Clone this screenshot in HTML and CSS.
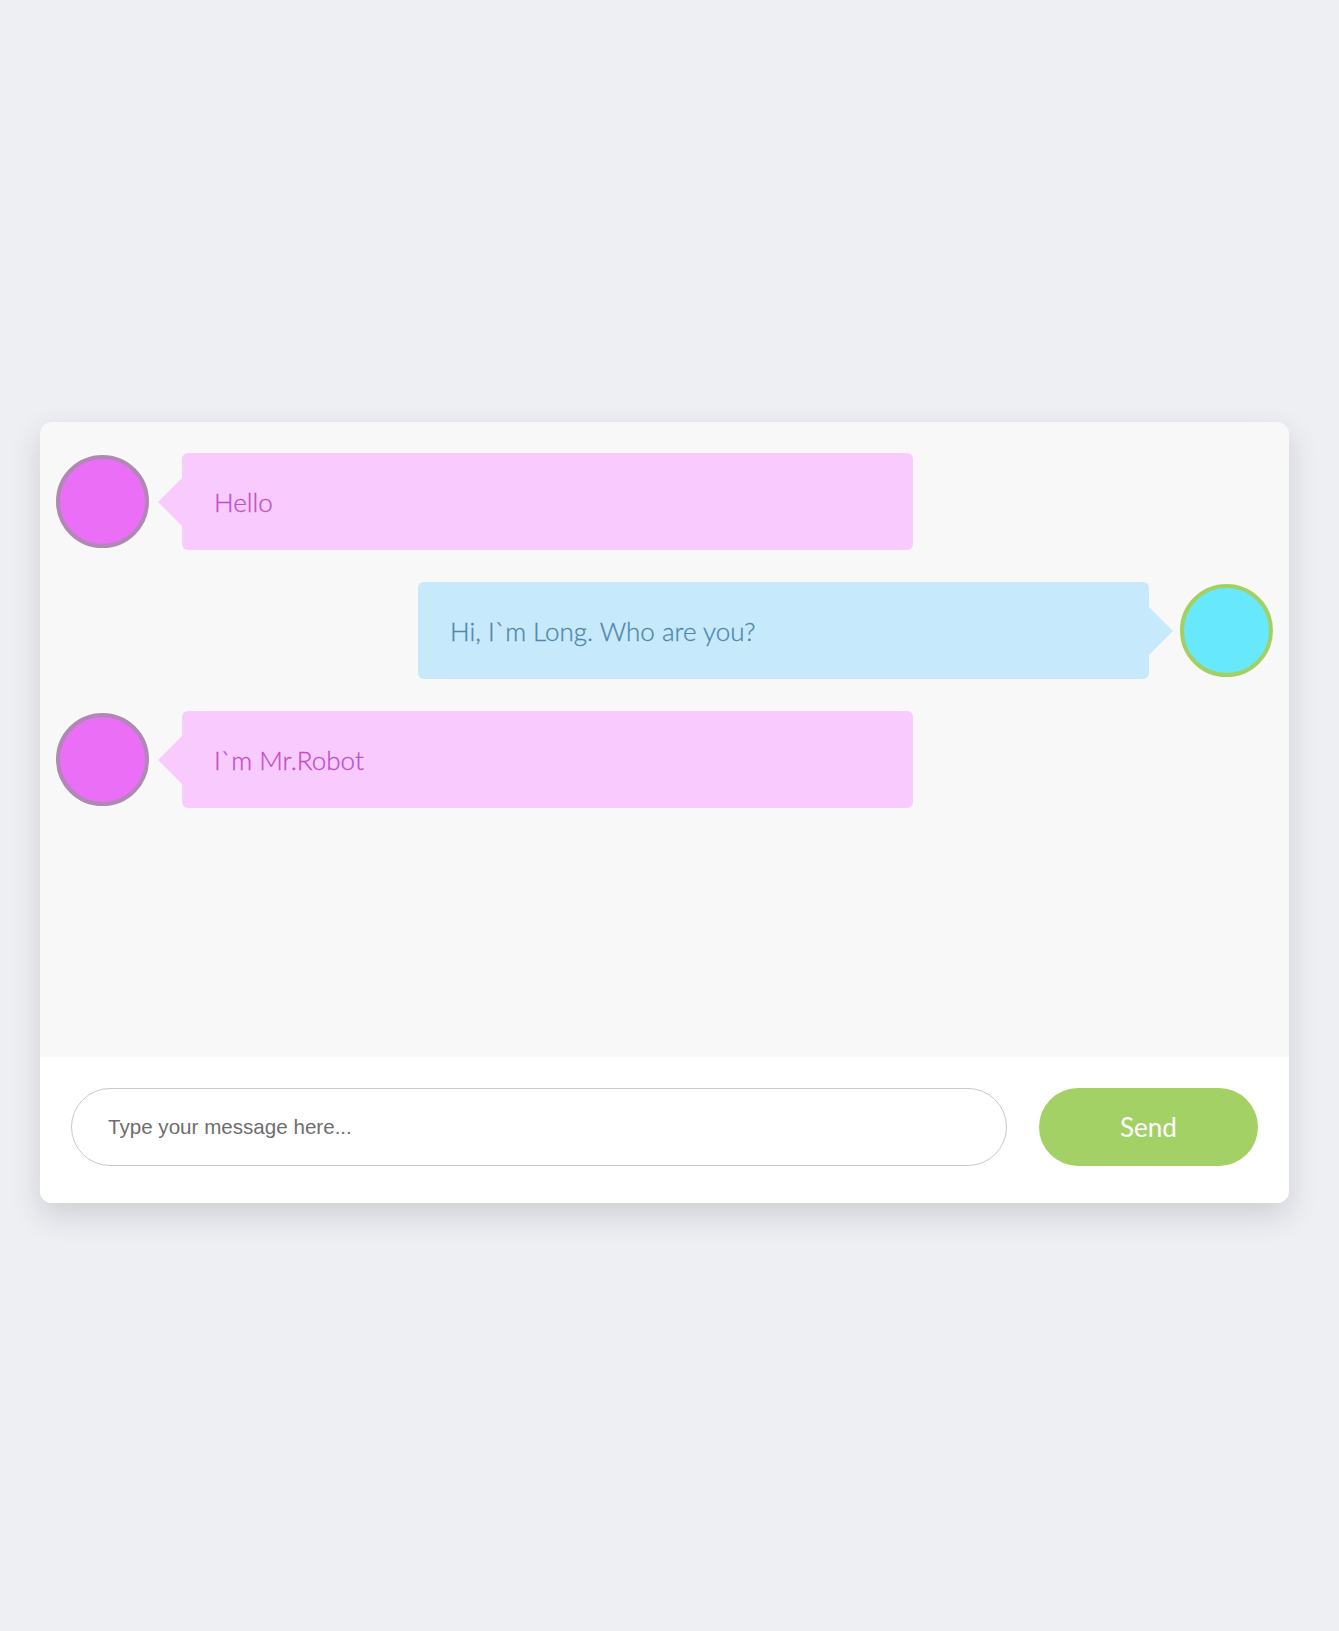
FILE: index.html
```html
<!DOCTYPE html>
<html lang="en">
<head>
<meta charset="utf-8">
<title>Chat</title>
<link rel="stylesheet" href="styles.css">
</head>
<body>
<div class="chat">
  <div class="messages">
    <div class="row row-left">
      <div class="avatar avatar-robot"></div>
      <div class="bubble bubble-robot">Hello</div>
    </div>
    <div class="row row-right">
      <div class="bubble bubble-user">Hi, I`m Long. Who are you?</div>
      <div class="avatar avatar-user"></div>
    </div>
    <div class="row row-left">
      <div class="avatar avatar-robot"></div>
      <div class="bubble bubble-robot">I`m Mr.Robot</div>
    </div>
  </div>
  <div class="composer">
    <input class="input" type="text" placeholder="Type your message here...">
    <button class="send" type="button">Send</button>
  </div>
</div>
</body>
</html>
```

FILE: styles.css
```css
* { box-sizing: border-box; }

html, body {
  margin: 0;
  padding: 0;
  background: #eeeff3;
}

body {
  min-height: 1631px;
  padding: 422px 0 0 40px;
  font-family: Lato, "Open Sans", sans-serif;
}

.chat {
  width: 1249px;
  height: 781px;
  background: #f8f8f8;
  border-radius: 12px;
  box-shadow: 0 12px 30px rgba(40, 44, 60, 0.16);
  display: flex;
  flex-direction: column;
  overflow: hidden;
}

.messages {
  flex: 0 0 635px;
  padding: 31px 16px;
  display: flex;
  flex-direction: column;
  gap: 32px;
}

.row {
  display: flex;
  align-items: center;
  height: 97px;
}

.row-right {
  justify-content: flex-end;
}

.avatar {
  width: 93px;
  height: 93px;
  border-radius: 50%;
  border: 4px solid;
  flex: 0 0 auto;
}

.avatar-robot {
  background: #ea6ff6;
  border-color: #b087b5;
}

.avatar-user {
  background: #68e8fd;
  border-color: #a3d063;
}

.bubble {
  position: relative;
  width: 731px;
  height: 97px;
  border-radius: 6px;
  padding: 0 32px;
  display: flex;
  align-items: center;
  font-size: 26px;
  font-weight: 300;
  -webkit-text-stroke: 0.3px currentColor;
}

.bubble::before {
  content: "";
  position: absolute;
  top: 50%;
  margin-top: -24px;
  border-top: 24px solid transparent;
  border-bottom: 24px solid transparent;
}

.bubble-robot {
  margin-left: 33px;
  background: #f9cafd;
  color: #bd4fc6;
}

.bubble-robot::before {
  left: -24px;
  border-right: 24px solid #f9cafd;
}

.bubble-user {
  margin-right: 31px;
  background: #c6e9fc;
  color: #4f86a9;
}

.bubble-user::before {
  right: -24px;
  border-left: 24px solid #c6e9fc;
}

.composer {
  flex: 1 1 auto;
  background: #ffffff;
  display: flex;
  align-items: flex-start;
  gap: 32px;
  padding: 31px 31px 0 31px;
}

.input {
  flex: 1 1 auto;
  height: 78px;
  border: 1.5px solid #c9c9c9;
  border-radius: 39px;
  padding: 0 36px;
  font-family: "Liberation Sans", Arial, sans-serif;
  font-size: 20.6px;
  color: #555;
  background: #fff;
  outline: none;
}

.input::placeholder {
  color: #6e6e6e;
  opacity: 1;
}

.send {
  flex: 0 0 219px;
  height: 78px;
  border: none;
  border-radius: 39px;
  background: #a4d166;
  color: #ffffff;
  font-family: Lato, "Open Sans", sans-serif;
  font-size: 26px;
  font-weight: 400;
  cursor: pointer;
}
```
